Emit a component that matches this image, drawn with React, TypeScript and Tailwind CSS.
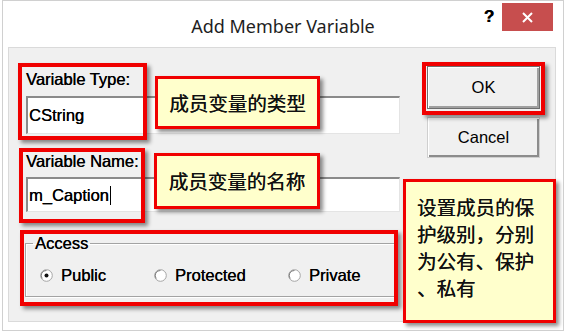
export default function App() {
  const radios = [
    { label: 'Public', checked: true, w: 'w-[114px]' },
    { label: 'Protected', checked: false, w: 'w-[134px]' },
    { label: 'Private', checked: false, w: 'w-[90px]' },
  ];

  return (
    <div className="relative w-[566px] h-[333px] bg-white px-[2px] pb-[2px] overflow-hidden font-['Liberation_Sans',Arial,sans-serif] text-black [text-shadow:0.35px_0_0_currentColor]">
      <div className="h-full border border-[#d0d0d0] bg-white">
        {/* title bar */}
        <div className="grid grid-cols-[86px_1fr_86px] h-[46px]">
          <div />
          <div className="flex items-center justify-center pt-[4px] text-[18px] text-[#1e1e1e] font-['Noto_Sans',sans-serif] [text-shadow:none]">
            Add Member Variable
          </div>
          <div className="flex items-start pt-[2px]">
            <span className="mt-[3px] ml-[2px] w-[20px] text-center text-[17px] font-bold leading-[22px]">?</span>
            <button className="ml-[3px] w-[51px] h-[28px] bg-[#c74e4e] flex items-center justify-center">
              <svg width="11" height="11" viewBox="0 0 11 11">
                <path d="M1 1L10 10M10 1L1 10" stroke="white" strokeWidth="2" />
              </svg>
            </button>
          </div>
        </div>

        {/* client area */}
        <div className="ml-[5px] w-[548px] h-[275px] border border-[#dadada] bg-[#f0f0f0] flex pl-[17px]">
          <div className="w-[374px] pt-[21px]">
            <div className="h-[20px] leading-[20px] text-[16.5px]">Variable Type:</div>
            <div className="mt-[7px] h-[38px] bg-white border-t-2 border-l-2 border-t-[#8a8a8a] border-l-[#8a8a8a] border-b border-r border-b-[#e4e4e4] border-r-[#e4e4e4] flex items-center pl-[1px] text-[16.5px]">
              CString
            </div>
            <div className="mt-[17px] h-[20px] leading-[20px] text-[16.5px]">Variable Name:</div>
            <div className="mt-[6px] h-[35px] bg-white border-t-2 border-l-2 border-t-[#8a8a8a] border-l-[#8a8a8a] border-b border-r border-b-[#e4e4e4] border-r-[#e4e4e4] flex items-center pl-[1px] text-[16.5px]">
              m_Caption
              <span className="ml-[1px] w-px h-[19px] bg-black" />
            </div>
            <fieldset className="mt-[22px] -ml-px w-[370px] h-[63px] border border-[#a3a3a3] shadow-[inset_1px_1px_0_#ffffff,1px_1px_0_#ffffff]">
              <legend className="ml-[7px] px-[2px] text-[16.5px] leading-[18px]">Access</legend>
              <div className="flex items-center pl-[14px] pt-[11px]">
                {radios.map(r => (
                  <div key={r.label} className={`${r.w} flex items-center gap-[8px] text-[16.5px]`}>
                    <svg width="13" height="13" viewBox="0 0 13 13">
                      <circle cx="6.5" cy="6.5" r="5.8" fill="#ffffff" stroke="#a5a5a5" strokeWidth="1" />
                      <path d="M2.2 9.5A5 5 0 0 1 6.5 1.5" fill="none" stroke="#7d7d7d" strokeWidth="1" />
                      {r.checked && <circle cx="6.5" cy="6.5" r="2" fill="#111111" />}
                    </svg>
                    <span>{r.label}</span>
                  </div>
                ))}
              </div>
            </fieldset>
          </div>
          <div className="ml-[27px] w-[113px] pt-[18px]">
            <button className="w-[113px] h-[43px] bg-[#f0f0f0] border border-[#6e6e6e] shadow-[inset_1px_1px_0_#ffffff,inset_-2px_-2px_0_#a0a0a0] text-[16.5px]">
              OK
            </button>
            <button className="mt-[8px] w-[113px] h-[41px] bg-[#f0f0f0] border border-[#cfcfcf] shadow-[inset_1px_1px_0_#ffffff,inset_-2px_-2px_0_#8c8c8c] text-[16.5px]">
              Cancel
            </button>
          </div>
        </div>
      </div>

      {/* annotation highlights */}
      <div className="absolute left-[18px] top-[63px] w-[129px] h-[77px] border-[4px] border-[#f00000] shadow-[3px_3px_4px_rgba(0,0,0,0.45)]" />
      <div className="absolute left-[19px] top-[148px] w-[126px] h-[75px] border-[4px] border-[#f00000] shadow-[3px_3px_4px_rgba(0,0,0,0.45)]" />
      <div className="absolute left-[20px] top-[230px] w-[378px] h-[76px] border-[4px] border-[#f00000] shadow-[3px_3px_4px_rgba(0,0,0,0.45)]" />
      <div className="absolute left-[422px] top-[62px] w-[123px] h-[53px] border-[4px] border-[#f00000] shadow-[3px_3px_4px_rgba(0,0,0,0.45)]" />

      {/* callouts */}
      <div className="absolute left-[155px] top-[76px] w-[165px] h-[53px] border-[3px] border-[#f00000] bg-[#ffffcc] shadow-[3px_3px_4px_rgba(0,0,0,0.45)] flex items-center justify-center font-['Noto_Sans_CJK_SC',sans-serif] text-[19.5px] text-[#111111]">
        成员变量的类型
      </div>
      <div className="absolute left-[154px] top-[153px] w-[166px] h-[56px] border-[3px] border-[#f00000] bg-[#ffffcc] shadow-[3px_3px_4px_rgba(0,0,0,0.45)] flex items-center justify-center font-['Noto_Sans_CJK_SC',sans-serif] text-[19.5px] text-[#111111]">
        成员变量的名称
      </div>
      <div className="absolute left-[403px] top-[179px] w-[153px] h-[144px] border-[3px] border-[#f00000] bg-[#ffffcc] shadow-[3px_3px_4px_rgba(0,0,0,0.45)] pl-[11px] pt-[11px] font-['Noto_Sans_CJK_SC',sans-serif] text-[19.5px] leading-[27px] text-[#111111]">
        <div>设置成员的保</div>
        <div>护级别，分别</div>
        <div>为公有、保护</div>
        <div>、私有</div>
      </div>
    </div>
  );
}
